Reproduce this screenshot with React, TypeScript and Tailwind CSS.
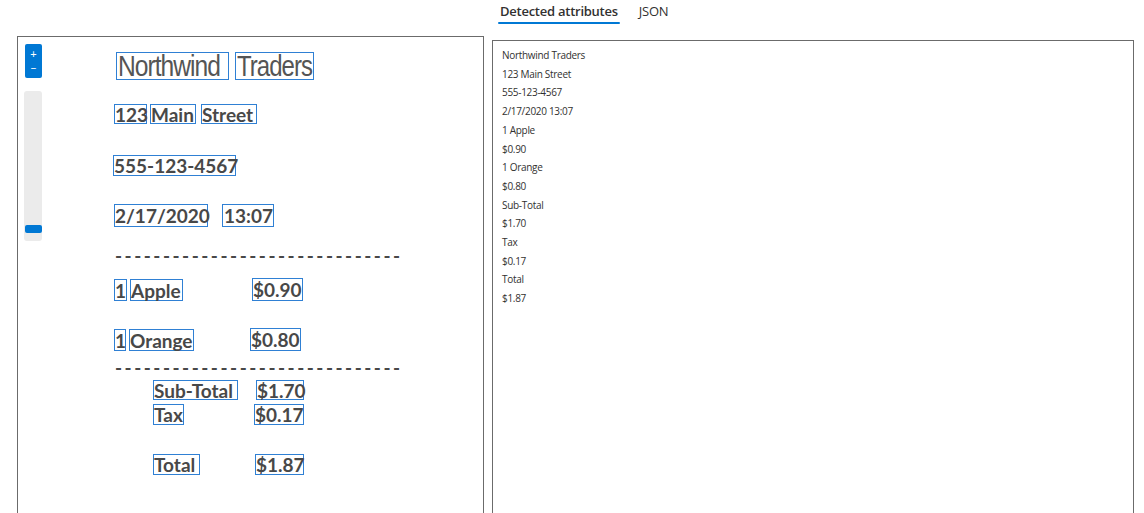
import React from 'react';

const FIELDS = [
  'Northwind Traders',
  '123 Main Street',
  '555-123-4567',
  '2/17/2020 13:07',
  '1 Apple',
  '$0.90',
  '1 Orange',
  '$0.80',
  'Sub-Total',
  '$1.70',
  'Tax',
  '$0.17',
  'Total',
  '$1.87',
];

const box = 'border-[1.5px] border-[#2f80d4] flex items-center leading-none whitespace-nowrap';
const DASHES = '------------------------------';

export default function App() {
  return (
    <div className="h-[513px] w-[1144px] overflow-hidden bg-white font-['Open_Sans',sans-serif] text-[#323130]">
      <div className="flex gap-[8px] pl-[17px]">
        {/* Document preview */}
        <div className="relative mt-[36px] h-[520px] w-[467px] border border-[#6b6b6b] font-['Lato',sans-serif] font-bold text-[#484848]">
          <div className="absolute left-[7px] top-[7px] flex h-[34px] w-[17px] flex-col items-center justify-center rounded-[2px] bg-[#0078d4] text-[11px] leading-[14px] font-normal text-white">
            <span>+</span>
            <span>−</span>
          </div>
          <div className="absolute left-[6px] top-[54px] h-[150px] w-[18px] rounded-[3px] bg-[#ebebeb]">
            <div className="absolute left-[1px] top-[134px] h-[8px] w-[17px] rounded-[2px] bg-[#0078d4]" />
          </div>

          <div className="pl-[98px] pt-[15px]">
            <div className="flex h-[28px] gap-[6px]">
              <div className={`${box} w-[113px] pl-[1px] font-['Liberation_Sans',sans-serif] font-normal text-[30px] text-[#555] tracking-[-1.2px]`}>
                <span className="inline-block origin-left scale-x-[0.82]">Northwind</span>
              </div>
              <div className={`${box} w-[79px] pl-[1px] font-['Liberation_Sans',sans-serif] font-normal text-[30px] text-[#555] tracking-[-1.2px]`}>
                <span className="inline-block origin-left scale-x-[0.8]">Traders</span>
              </div>
            </div>

            <div className="mt-[24px] flex h-[20px] text-[19px]">
              <div className={`${box} w-[33px] -ml-[2px]`}>123</div>
              <div className={`${box} ml-[3px] w-[46px]`}>Main</div>
              <div className={`${box} ml-[5px] w-[56px]`}>Street</div>
            </div>

            <div className="mt-[31px] flex h-[21px] text-[19px]">
              <div className={`${box} -ml-[3px] w-[123px]`}>555-123-4567</div>
            </div>

            <div className="mt-[28px] flex h-[23px] text-[19px]">
              <div className={`${box} -ml-[2px] w-[94px]`}>2/17/2020</div>
              <div className={`${box} ml-[14px] w-[52px] pl-[1px]`}>13:07</div>
            </div>

            <div className="-ml-[1px] mt-[22px] h-[14px] whitespace-nowrap text-[19px] leading-[14px] tracking-[2.5px]">{DASHES}</div>

            <div className="mt-[16px] flex h-[22px] text-[19px]">
              <div className={`${box} -ml-[2px] w-[13px]`}>1</div>
              <div className={`${box} ml-[3px] w-[53px]`}>Apple</div>
              <div className={`${box} ml-[69px] w-[51px] -mt-[1px]`}>$0.90</div>
            </div>

            <div className="mt-[28px] flex h-[22px] text-[19px]">
              <div className={`${box} -ml-[2px] w-[12px]`}>1</div>
              <div className={`${box} ml-[3px] w-[65px]`}>Orange</div>
              <div className={`${box} ml-[56px] w-[51px] -mt-[1px]`}>$0.80</div>
            </div>

            <div className="-ml-[1px] mt-[10px] h-[14px] whitespace-nowrap text-[19px] leading-[14px] tracking-[2.5px]">{DASHES}</div>

            <div className="mt-[5px] flex h-[20px] text-[19px]">
              <div className={`${box} ml-[37px] w-[85px]`}>Sub-Total</div>
              <div className={`${box} ml-[18px] w-[48px]`}>$1.70</div>
            </div>

            <div className="mt-[4px] flex h-[21px] text-[19px]">
              <div className={`${box} ml-[37px] w-[31px]`}>Tax</div>
              <div className={`${box} ml-[70px] w-[50px]`}>$0.17</div>
            </div>

            <div className="mt-[29px] flex h-[21px] text-[19px]">
              <div className={`${box} ml-[37px] w-[47px]`}>Total</div>
              <div className={`${box} ml-[55px] w-[49px]`}>$1.87</div>
            </div>
          </div>
        </div>

        {/* Results */}
        <div className="flex w-[642px] flex-col">
          <div className="flex h-[26px] items-start gap-[19px] pl-[6px] text-[13px] tracking-[-0.25px]">
            <div className="flex flex-col items-center">
              <span className="px-[2px] pt-[1px] font-semibold leading-[20px]">Detected attributes</span>
              <div className="mt-[1px] h-[2px] w-full rounded-full bg-[#0078d4]" />
            </div>
            <span className="pt-[1px] leading-[20px]">JSON</span>
          </div>
          <div className="mt-[14px] h-[500px] border border-[#6b6b6b] pl-[9px] pt-[5px] text-[10px] leading-[18.7px] tracking-[-0.3px]">
            {FIELDS.map((f) => (
              <div key={f}>{f}</div>
            ))}
          </div>
        </div>
      </div>
    </div>
  );
}
